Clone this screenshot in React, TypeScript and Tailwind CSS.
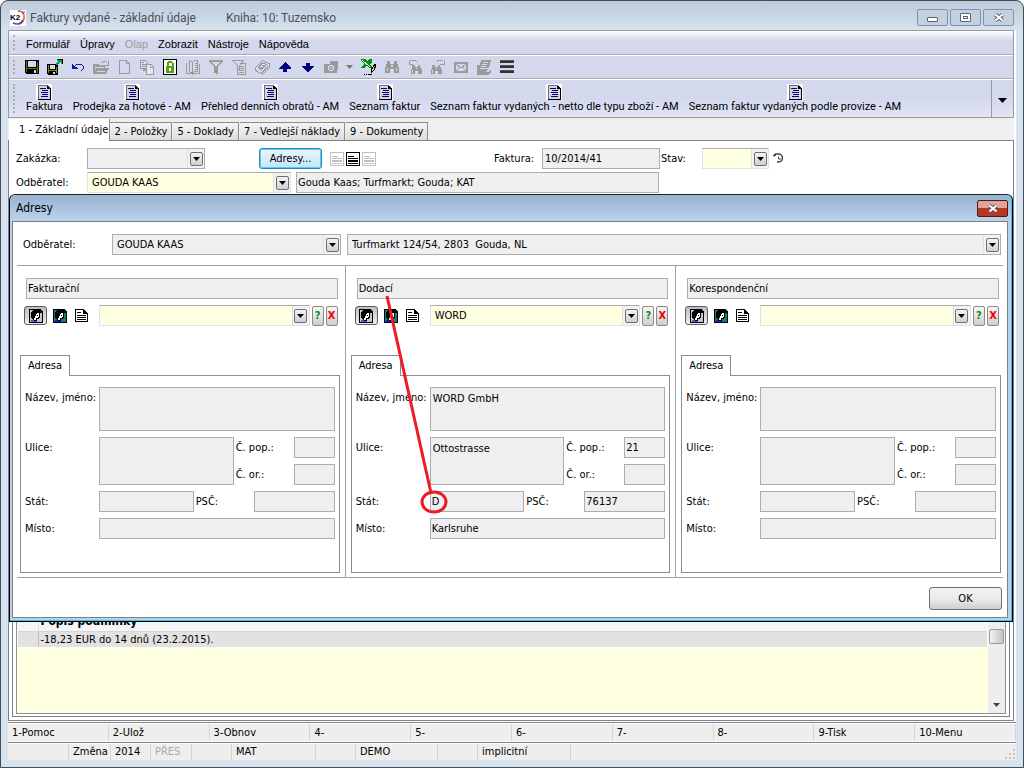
import { useId, useState } from "react";
import type { ReactNode } from "react";
import clsx from "clsx";

type AddressData = {
  title: string;
  code: string;
  name: string;
  street: string;
  houseNo: string;
  orientNo: string;
  state: string;
  zip: string;
  city: string;
};

const emptyAddress = {
  code: "",
  name: "",
  street: "",
  houseNo: "",
  orientNo: "",
  state: "",
  zip: "",
  city: "",
};

const addresses: AddressData[] = [
  { ...emptyAddress, title: "Fakturační" },
  {
    title: "Dodací",
    code: "WORD",
    name: "WORD GmbH",
    street: "Ottostrasse",
    houseNo: "21",
    orientNo: "",
    state: "D",
    zip: "76137",
    city: "Karlsruhe",
  },
  { ...emptyAddress, title: "Korespondenční" },
];

const menuItems = ["Formulář", "Úpravy", "Olap", "Zobrazit", "Nástroje", "Nápověda"];

const reports = [
  "Faktura",
  "Prodejka za hotové - AM",
  "Přehled denních obratů - AM",
  "Seznam faktur",
  "Seznam faktur vydaných - netto dle typu zboží - AM",
  "Seznam faktur vydaných podle provize - AM",
];

const tabs = [
  "1 - Základní údaje",
  "2 - Položky",
  "5 - Doklady",
  "7 - Vedlejší náklady",
  "9 - Dokumenty",
];

const functionKeys = [
  "1-Pomoc",
  "2-Ulož",
  "3-Obnov",
  "4-",
  "5-",
  "6-",
  "7-",
  "8-",
  "9-Tisk",
  "10-Menu",
];

const GRAY = "#9b9b9b";

function Icon({ children, size = 16 }: { children: ReactNode; size?: number }) {
  return (
    <svg width={size} height={size} viewBox="0 0 16 16" fill="none" shapeRendering="crispEdges" aria-hidden="true">
      {children}
    </svg>
  );
}

const Binoculars = () => (
  <path
    fill={GRAY}
    d="M3 2h3v3h4V2h3v3h1v3h1v6h-5v-4H6v4H1V8h1V5h1zM3 9v3h1V9zM12 9v3h1V9zM7 6v2h2V6z"
    fillRule="evenodd"
  />
);

const tools: { label: string; icon: ReactNode }[] = [
  {
    label: "Uložit",
    icon: (
      <>
        <path d="M1 1h14v14H2l-1-1z" fill="#000" />
        <path d="M4 2h8v6H4z" fill="#d3d8ed" />
        <path d="M2 2h1v11H2zM13 3h1v11h-1zM3 9h10v1H3z" fill="#6b6b00" />
        <path d="M10 11h2v3h-2z" fill="#d3d8ed" />
      </>
    ),
  },
  {
    label: "Uložit a zavřít",
    icon: (
      <>
        <path d="M0 5h11v11H1l-1-1z" fill="#000" />
        <path d="M3 6h5v4H3z" fill="#d3d8ed" />
        <path d="M1 6h1v8H1zM9 8h1v6H9zM2 11h7v1H2z" fill="#8a8a00" />
        <path d="M6 13h2v2H6z" fill="#d3d8ed" />
        <path d="M10 0h5v5h-1V3h-1v1h-1v1h-1v1h-2V4h1V3h1V2h-1z" fill="#00a43a" />
        <path d="M11 0h5v5h-1V1h-4z" fill="#000" />
      </>
    ),
  },
  {
    label: "Zpět",
    icon: (
      <>
        <path d="M2 4v6h6L6 8 4 7z" fill="#0b1ea0" />
        <path d="M5 7l2-2h4l2 2v3l-2 2" stroke="#0b1ea0" />
      </>
    ),
  },
  {
    label: "Otevřít",
    icon: (
      <>
        <path d="M0 5h5l1 1h6v3h4l-3 6H0z" fill={GRAY} />
        <path d="M2 8h9M2 10h1M4 12h8" stroke="#d3d8ed" />
        <path d="M8 3h2l2-1 2 2M15 2v4h-3" stroke={GRAY} />
      </>
    ),
  },
  {
    label: "Nový",
    icon: <path d="M3.500 1.500h7l3 3v10h-10zM10.500 1.500v3h3" stroke={GRAY} />,
  },
  {
    label: "Kopie",
    icon: (
      <>
        <path d="M1.500 1.500h5l2 2v6h-7z" stroke={GRAY} />
        <path d="M3 3h2v1H3zM3 5h5v1H3zM3 7h5v1H3zM4 9h4v3H4z" fill={GRAY} />
        <path d="M7.500 5.500h5l2 2v8h-7z" fill="#e4e7f4" stroke={GRAY} />
        <path d="M11.500 5.500v3h3" stroke={GRAY} />
      </>
    ),
  },
  {
    label: "Zámek",
    icon: (
      <>
        <path d="M1 0h14v16H1z" fill="#000" />
        <path d="M2 1h12v14H2z" fill="#fff" />
        <path d="M4 7h8v7H4z" fill="#5aa00a" />
        <path d="M5.500 7V4l1-1h3l1 1v3" stroke="#5aa00a" strokeWidth="2" />
        <path d="M7 9h2v3H7z" fill="#fff" />
      </>
    ),
  },
  {
    label: "Kniha",
    icon: (
      <>
        <path d="M1.500 3.500v11h5l1 1 1-1h6v-10M4.500 1.500l3 2v11l-3-2zM7.500 3.500l2-2h3v11h-3l-2 2" stroke={GRAY} />
        <path d="M10 4h2v1h-2zM10 6h2v1h-2zM10 8h2v1h-2zM10 10h2v1h-2z" fill={GRAY} />
      </>
    ),
  },
  {
    label: "Filtr",
    icon: <path d="M2 2h12l-5 6v6l-2-1V8z" stroke={GRAY} strokeWidth="1.500" />,
  },
  {
    label: "Seznam filtrů",
    icon: (
      <>
        <path d="M1.500 1.500h11l-4 5v5l-2-2v-3z" stroke={GRAY} />
        <path d="M9 4.500h5v10.500H6.500v-5M9 7h4M9 9h4M9 11h4M8 13h5" stroke={GRAY} />
      </>
    ),
  },
  {
    label: "Vymazat",
    icon: (
      <>
        <path d="M1.500 8.500l7-7 7 3v4l-7 7-7-4z" stroke={GRAY} />
        <path d="M3 8l5-5 5 2-6 6zM7 13l7-7v2l-6 7z" fill={GRAY} />
        <path d="M8 5h3v1H8zM6 7h3v1H6z" fill="#eef0f8" />
      </>
    ),
  },
  {
    label: "Předchozí",
    icon: <path d="M8 3l6 6v1h-4v3H6v-3H2V9z" fill="#000080" />,
  },
  {
    label: "Další",
    icon: <path d="M6 4h4v3h4v1l-6 5-6-5V7h4z" fill="#000080" />,
  },
  {
    label: "Fotografie",
    icon: (
      <>
        <path d="M1 5h6V2h8v9h-1v3H1z" fill={GRAY} />
        <circle cx="8" cy="9" r="2.500" stroke="#d3d8ed" />
        <path d="M7 10l3-3" stroke="#d3d8ed" />
      </>
    ),
  },
];

const moreTools: { label: string; icon: ReactNode }[] = [
  {
    label: "Export do Excelu",
    icon: (
      <>
        <path d="M0 0h4l2 2 2-2h3v3L9 5l3 4H8L6 7 3 9H0l3-4-3-3z" fill="#0a8a12" />
        <path d="M1 1l8 7" stroke="#d7f0d7" />
        <path d="M14 5l1 1-2 5-3 3v-3z" fill="#f2d21b" stroke="#000" />
        <path d="M3 15h1v1H3zM5 15h1v1H5zM7 15h4v1H7z" fill="#000" />
      </>
    ),
  },
  { label: "Hledat", icon: <Binoculars /> },
  {
    label: "Hledat předchozí",
    icon: (
      <>
        <g transform="translate(3 4) scale(.8)">
          <Binoculars />
        </g>
        <path d="M2 6V2M2 5h4M3 2l3-1 3 1v1" stroke={GRAY} />
      </>
    ),
  },
  {
    label: "Hledat další",
    icon: (
      <>
        <g transform="translate(0 4) scale(.8)">
          <Binoculars />
        </g>
        <path d="M14 6V2M14 5h-4M13 2l-3-1-3 1v1" stroke={GRAY} />
      </>
    ),
  },
  {
    label: "E-mail",
    icon: (
      <>
        <path d="M1 3h14v11H1z" fill={GRAY} />
        <path d="M3 5h10v7H3z" fill="#d3d8ed" />
        <path d="M3 5l5 4 5-4M3 12l4-4M13 12L9 8" stroke={GRAY} />
      </>
    ),
  },
  {
    label: "Přílohy",
    icon: (
      <>
        <path d="M5 1h10l-2 8H3zM1 6h3v7h9l2-3v3l-2 3H1z" fill={GRAY} />
        <path d="M7 3h5M6 5h5M5 7h5" stroke="#d3d8ed" />
        <path d="M2 10h10l-2 3H2z" fill={GRAY} />
      </>
    ),
  },
  {
    label: "Menu",
    icon: (
      <>
        <path d="M1 1h14v3H1zM1 6h14v3H1zM1 11h14v3H1z" fill="#333" />
        <path d="M1 1h14v1H1zM1 6h14v1H1zM1 11h14v1H1z" fill="#4d5a52" />
      </>
    ),
  },
];

const K2Logo = () => (
  <svg width="16" height="16" viewBox="0 0 16 16" aria-hidden="true">
    <path d="M0 0h16v16H0z" fill="#fff" />
    <path d="M8 1q6 0 6 6t-5 7" fill="none" stroke="#d6203a" strokeWidth="1.500" />
    <path d="M10 1q4 2 4 7t-6 7" fill="none" stroke="#f0a040" />
    <path d="M3 13q6 3 10-3" fill="none" stroke="#4a4fa8" strokeWidth="1.500" />
    <path d="M12 2l3-1-1 3z" fill="#8a5ab0" />
    <text x="0" y="10" fontSize="8" fontWeight="900" fontFamily="Liberation Sans, sans-serif">
      K2
    </text>
  </svg>
);

const ReportIcon = () => (
  <svg width="16" height="16" viewBox="0 0 16 16" shapeRendering="crispEdges" aria-hidden="true">
    <path d="M0 0h16v16H0z" fill="#fff" />
    <path d="M2 1h10v1H3v13H2z" fill="#6f6f6f" />
    <path d="M11 2h2v1h1v1h1v12H2v-1h12V5h-3z" fill="#000" />
    <path d="M3 2h8v3h3v10H3z" fill="#d3d7dc" />
    <path d="M4 4h6v1H4zM6 6h6v1H6zM5 8h7v1H5zM6 10h6v1H6zM5 12h7v1H5z" fill="#00008b" />
  </svg>
);

const PersonIcon = ({ back, coat }: { back: string; coat: string }) => (
  <svg width="14" height="14" viewBox="0 0 14 14" shapeRendering="crispEdges" aria-hidden="true">
    <path d="M0 0h11l3 3v11H0z" fill="#000" />
    <path d="M1 1h9v3h3v9H1z" fill={back} />
    <path d="M4 1h5l2 2v5l-1 2H8v2H6l-3-2-1-2V3z" fill="#000" />
    <path d="M8 4h2v4H9v1H7v2H5V9h1V7h1V5h1z" fill="#fff" />
    <path d="M8 6h1v1H8z" fill="#000" />
    <path d="M2 13v-2h2l2 1h2v1z" fill={coat} />
  </svg>
);

const PageIcon = () => (
  <svg width="14" height="14" viewBox="0 0 14 14" shapeRendering="crispEdges" aria-hidden="true">
    <path d="M0 0h9v1h1v1h1v1h1v1h1v9H0zM1 1v11h11V5H8V1z" fill="#000" fillRule="evenodd" />
    <path d="M2 3h4v1H2zM2 6h9v1H2zM2 8h9v1H2zM2 10h9v1H2z" fill="#000" />
  </svg>
);

const LinesIcon = ({ color }: { color: string }) => (
  <svg width="14" height="14" viewBox="0 0 14 14" shapeRendering="crispEdges" aria-hidden="true">
    <path d="M0 0h14v14H0zM1 1v12h12V1z" fill={color} fillRule="evenodd" />
    <path d="M2 4h6v1H2zM2 6h10v1H2zM2 8h10v2H2zM2 11h10v1H2z" fill={color} />
  </svg>
);

function Grip() {
  return <span className="ml-1 w-[3px] self-stretch my-1 border-l-2 border-dotted border-[#a9adbd] shrink-0" />;
}

type ComboProps = {
  label: string;
  value?: string;
  gray?: boolean;
  className?: string;
  id?: string;
};

function Combo({ label, value = "", gray, className, id }: ComboProps) {
  return (
    <div className={clsx("relative h-[21px]", className)}>
      <select
        id={id}
        aria-label={label}
        defaultValue={value}
        className={clsx(
          "block h-full w-full appearance-none border pr-5 pl-1 whitespace-pre",
          gray ? "border-[#abadb3] bg-[#efefef]" : "border-[#e0e3ee] border-t-[#abadb3] bg-[#ffffe1]"
        )}
      >
        <option>{value}</option>
      </select>
      <span className="pointer-events-none absolute inset-y-px right-px flex w-[17px] items-center justify-center border-l border-[#e0e0e0] bg-[#f2f2f2]">
        <span className="flex h-[14px] w-[13px] items-center justify-center rounded-xs border border-[#707070] bg-linear-to-b from-[#f4f4f4] to-[#cfcfcf]">
          <svg width="7" height="4" viewBox="0 0 7 4" aria-hidden="true">
            <path d="M0 0h7L3.500 4z" fill="#000" />
          </svg>
        </span>
      </span>
    </div>
  );
}

type FieldProps = {
  label: string;
  value: string;
  className?: string;
  labelClass?: string;
  multiline?: boolean;
};

// label and input are two cells of the surrounding grid
function Field({ label, value, className, labelClass, multiline }: FieldProps) {
  const id = useId();
  const box = clsx("block w-full min-w-0 border border-[#abadb3] bg-[#efefef]", className);
  return (
    <>
      <label htmlFor={id} className={clsx("pt-1 whitespace-nowrap", labelClass)}>
        {label}
      </label>
      {multiline ? (
        <textarea id={id} readOnly defaultValue={value} className={clsx(box, "resize-none overflow-hidden px-0.5 pt-1")} />
      ) : (
        <input id={id} readOnly defaultValue={value} className={clsx(box, "h-[21px] px-px")} />
      )}
    </>
  );
}

function AddressColumn({ address, children }: { address: AddressData; children?: ReactNode }) {
  const small = "h-5 w-3 rounded-xs border border-[#8a8a8a] bg-linear-to-b from-[#f6f6f6] to-[#cfcfcf] text-[11px] leading-none font-bold";
  return (
    <section className="relative border-r border-[#a0a0a0] pt-3 pr-[5px] pb-1 pl-[5px] last:border-r-0 last:pr-1.5">
      <input
        readOnly
        aria-label="Typ adresy"
        defaultValue={address.title}
        className="ml-1.5 block h-[21px] w-[calc(100%-8px)] border border-[#abadb3] bg-[#efefef] px-px"
      />
      <div className="mt-1.5 ml-1 flex h-[21px] items-center pr-0.5">
        <button
          aria-label="Partner"
          className="flex h-[19px] w-[23px] items-center justify-center rounded-[3px] border border-[#5c5c5c] bg-linear-to-b from-[#bdbdbd] to-[#f0f0f0]"
        >
          <PersonIcon back="#c4c4d8" coat="#5b56c8" />
        </button>
        <button aria-label="Kontakt" className="ml-1.5">
          <PersonIcon back="#0b7f78" coat="#1717c0" />
        </button>
        <button aria-label="Adresa" className="ml-2">
          <PageIcon />
        </button>
        <Combo label="Výběr adresy" value={address.code} className="ml-2.5 min-w-0 flex-1" />
        <button className={clsx(small, "ml-0.5 text-[#0a8a1e]")}>?</button>
        <button className={clsx(small, "ml-0.5 text-[#f00000]")}>X</button>
      </div>
      <div className="mt-[29px] flex" role="tablist">
        <button role="tab" aria-selected="true" className="relative z-10 -mb-px h-[21px] w-[50px] border border-b-0 border-[#898c95] bg-white">
          Adresa
        </button>
      </div>
      <div className="grid h-[198px] grid-cols-[74px_1fr] content-start gap-y-1.5 border border-[#898c95] py-[11px] pr-1 pl-1">
        <Field label="Název, jméno:" value={address.name} className="h-11" multiline />
        <div className="col-span-2 grid grid-cols-[74px_1fr_60px_41px] gap-y-1.5">
          <Field label="Ulice:" value={address.street} className="row-span-2 h-12" labelClass="row-span-2" multiline />
          <Field label="Č. pop.:" value={address.houseNo} labelClass="pl-0.5" />
          <Field label="Č. or.:" value={address.orientNo} labelClass="pl-0.5" />
        </div>
        <div className="col-span-2 grid grid-cols-[74px_1fr_60px_81px]">
          <Field label="Stát:" value={address.state} />
          <Field label="PSČ:" value={address.zip} labelClass="pl-0.5" />
        </div>
        <Field label="Místo:" value={address.city} />
      </div>
      {children}
    </section>
  );
}

function AddressDialog({ onClose }: { onClose: () => void }) {
  const id = useId();
  return (
    <div
      role="dialog"
      aria-label="Adresy"
      className="absolute inset-x-0 top-[53px] z-20 rounded-t-md border border-black border-t-[#222] bg-[#b9d1ea]"
    >
      <div className="border-r border-b border-[#35c5ea] rounded-t-md pr-[3px] pb-0.5 pl-0.5 bg-linear-to-b from-[#97b3d2] from-0% to-[#b9d1ea] to-[24px]">
        <header className="flex h-[26px] items-center justify-between pl-1">
          <h2 className="text-[12px]">Adresy</h2>
          <button
            aria-label="Zavřít"
            onClick={onClose}
            className="flex h-[17px] w-[31px] items-center justify-center rounded-xs border border-[#4b1a1a] bg-linear-to-b from-[#e3a297] from-50% to-[#b8371f] to-50%"
          >
            <svg width="12" height="9" viewBox="0 0 12 9" aria-hidden="true">
              <path d="M2.500 1.500l7 6M9.500 1.500l-7 6" stroke="#525a70" strokeWidth="4" />
              <path d="M2.500 1.500l7 6M9.500 1.500l-7 6" stroke="#fff" strokeWidth="2" />
            </svg>
          </button>
        </header>
        <div className="border border-[#7d8087] bg-white">
          <div className="flex items-start pt-3 pr-1.5 pl-2.5">
            <label htmlFor={id} className="w-[89px] pt-1">
              Odběratel:
            </label>
            <Combo id={id} label="Odběratel" value="GOUDA KAAS" gray className="w-[229px]" />
            <Combo label="Adresa odběratele" value={"Turfmarkt 124/54, 2803\u00a0 Gouda, NL"} gray className="ml-1.5 flex-1" />
          </div>
          <hr className="mx-1 mt-2.5 border-[#a0a0a0]" />
          <div className="grid grid-cols-3 pl-0.5">
            {addresses.map((address) => (
              <AddressColumn key={address.title} address={address}>
                {address.state && (
                  <svg className="pointer-events-none absolute top-[30px] left-0 z-20" width="110" height="220" fill="none" aria-hidden="true">
                    <path d="M41 0l44 197" stroke="#ed1c24" strokeWidth="3" />
                    <ellipse cx="88" cy="206" rx="12" ry="10" stroke="#ed1c24" strokeWidth="3" />
                  </svg>
                )}
              </AddressColumn>
            ))}
          </div>
          <hr className="mx-1 border-[#a0a0a0]" />
          <div className="flex justify-end px-[5px] pt-[9px] pb-[7px]">
            <button
              onClick={onClose}
              className="h-[23px] w-[73px] rounded-[3px] border border-[#707070] bg-linear-to-b from-[#f2f2f2] via-[#ebebeb] to-[#cfcfcf]"
            >
              OK
            </button>
          </div>
        </div>
      </div>
    </div>
  );
}

function InvoiceForm({ onAddresses }: { onAddresses: () => void }) {
  const id = useId();
  const gray = "h-[21px] border border-[#abadb3] bg-[#efefef]";
  return (
    <form className="pt-[7px] pl-[7px]" onSubmit={(e) => e.preventDefault()}>
      <div className="flex items-start">
        <label htmlFor={id + "order"} className="w-[71px] pt-1">
          Zakázka:
        </label>
        <Combo id={id + "order"} label="Zakázka" gray className="w-[118px]" />
        <button
          type="button"
          onClick={onAddresses}
          className="ml-[54px] h-[21px] w-[63px] rounded-[3px] border border-[#2c84b8] bg-linear-to-b from-[#eaf6fd] to-[#c4e5f6] shadow-[inset_0_0_0_1px_#4fd0f7]"
        >
          Adresy...
        </button>
        <div className="ml-2 flex gap-0.5 pt-1">
          <LinesIcon color="#c0c0c0" />
          <LinesIcon color="#000" />
          <LinesIcon color="#c0c0c0" />
        </div>
        <label htmlFor={id + "no"} className="ml-[118px] w-12 pt-1">
          Faktura:
        </label>
        <input id={id + "no"} readOnly defaultValue="10/2014/41" className={clsx(gray, "w-[118px] px-0.5")} />
        <label htmlFor={id + "state"} className="w-[42px] pt-1 pl-px">
          Stav:
        </label>
        <Combo id={id + "state"} label="Stav" className="w-[67px]" />
        <svg className="mt-[5px] ml-1" width="10" height="10" viewBox="0 0 10 10" fill="none" stroke="#444" aria-hidden="true">
          <path d="M1 3.500V2.500L2.500 1h3a3.500 3.500 0 0 1 0 8H4" strokeWidth="1.500" />
          <path d="M5.500 3.500V6H8M0 2.500h3" />
        </svg>
      </div>
      <div className="mt-[3px] flex items-start">
        <label htmlFor={id + "customer"} className="w-[71px] pt-1">
          Odběratel:
        </label>
        <Combo id={id + "customer"} label="Odběratel" value="GOUDA KAAS" className="w-[204px]" />
        <input
          readOnly
          aria-label="Adresa"
          defaultValue="Gouda Kaas; Turfmarkt; Gouda; KAT"
          className={clsx(gray, "ml-[5px] w-[363px] px-px")}
        />
      </div>
    </form>
  );
}

function Conditions() {
  return (
    <div className="m-[3px] mt-2 flex flex-1 flex-col justify-end border border-[#7d8087] p-[3px] pb-0.5">
      <div className="flex h-[104px] border border-[#8f9299] bg-[#ffffe1]">
        <div className="flex-1 p-px">
          <table className="w-full border-collapse text-left">
            <thead>
              <tr className="h-[19px] border-b border-[#d5d5d5] bg-[#f4f5f7]">
                <th className="w-[20px] border-r border-[#e0e0e0]" />
                <th className="p-0 pl-0.5 text-[12px] leading-4 font-bold">Popis podmínky</th>
              </tr>
            </thead>
            <tbody>
              <tr className="bg-[#e2e2e2]">
                <td className="border-r border-[#bdbdbd]" />
                <td className="p-0 pl-0.5 leading-[15px]">-18,23 EUR do 14 dnů (23.2.2015).</td>
              </tr>
            </tbody>
          </table>
        </div>
        <div className="flex w-[17px] flex-col items-center justify-between bg-[#eeeeee]">
          <span className="mt-[18px] h-[15px] w-[15px] rounded-xs border border-[#9a9a9a] bg-linear-to-r from-[#f4f4f4] to-[#c4c4c8]" />
          <svg className="mb-1.5" width="7" height="4" viewBox="0 0 7 4" aria-hidden="true">
            <path d="M0 0h7L3.500 4z" fill="#444" />
          </svg>
        </div>
      </div>
    </div>
  );
}

const statusCell = "h-4 border-r border-[#d5d5d5] pl-1 leading-4";
const frameButton = "flex h-[17px] w-[31px] items-center justify-center rounded-xs border border-[#8392a8] bg-[#c3d0df]";

export default function App() {
  const [tab, setTab] = useState(0);
  const [dialogOpen, setDialogOpen] = useState(true);

  return (
    <div className="flex min-h-screen flex-col rounded-t-lg border border-[#4a4a4c] bg-[#d6e3f1] bg-linear-to-b from-[#bccad9] from-0% to-[#d6e3f1] to-[30px] px-[7px] pb-[7px] font-['DejaVu_Sans_Condensed','Noto_Sans',sans-serif] text-[11px] leading-[14px] text-black">
      <header className="flex h-[29px] items-center justify-between pt-1 pr-0.5 pl-0.5">
        <div className="flex items-center font-[Roboto,sans-serif] text-[12px] text-[#4a5058]">
          <K2Logo />
          <h1 className="ml-1 w-[196px] whitespace-nowrap">Faktury vydané - základní údaje</h1>
          <span>Kniha: 10: Tuzemsko</span>
        </div>
        <div className="flex gap-0.5">
          <button aria-label="Minimalizovat" className={frameButton}>
            <span className="mt-1 h-[5px] w-[11px] rounded-[1px] border border-[#5a6274] bg-white" />
          </button>
          <button aria-label="Maximalizovat" className={frameButton}>
            <span className="flex h-[9px] w-[11px] items-center justify-center rounded-[1px] border border-[#5a6274] bg-white">
              <span className="h-[3px] w-[5px] border border-[#5a6274]" />
            </span>
          </button>
          <button aria-label="Zavřít okno" className={frameButton}>
            <svg width="12" height="9" viewBox="0 0 12 9" aria-hidden="true">
              <path d="M2.500 1.500l7 6M9.500 1.500l-7 6" stroke="#5a6274" strokeWidth="4" />
              <path d="M2.500 1.500l7 6M9.500 1.500l-7 6" stroke="#fff" strokeWidth="2" />
            </svg>
          </button>
        </div>
      </header>

      <div className="flex flex-1 flex-col border-r-2 border-white">
        <div className="border border-[#9a9a9a] bg-[#d3d8ed] font-['Liberation_Sans',sans-serif]">
          <nav className="flex h-6 items-stretch border-b border-[#a8aab2] bg-linear-to-b from-white from-0% to-[#d3d8ed] to-[10px]">
            <Grip />
            <div className="ml-1 flex items-center pt-0.5 pl-px">
              {menuItems.map((item) => (
                <button key={item} disabled={item === "Olap"} className="px-[5px] disabled:text-[#9b9b9b]">
                  {item}
                </button>
              ))}
            </div>
          </nav>
          <div className="flex h-6 items-center border-t border-b border-t-white border-b-[#a8aab2]">
            <Grip />
            <div className="ml-1 flex items-center">
              {tools.map((tool) => (
                <button key={tool.label} aria-label={tool.label} className="flex w-[23px] justify-center">
                  <Icon>{tool.icon}</Icon>
                </button>
              ))}
              <button aria-label="Další možnosti" className="flex w-[15px] justify-center">
                <svg width="7" height="4" viewBox="0 0 7 4" aria-hidden="true">
                  <path d="M0 0h7L3.500 4z" fill="#7a7a7a" />
                </svg>
              </button>
              {moreTools.map((tool) => (
                <button key={tool.label} aria-label={tool.label} className="flex w-[23px] justify-center">
                  <Icon>{tool.icon}</Icon>
                </button>
              ))}
            </div>
          </div>
          <div className="flex h-[38px] border-t border-white bg-linear-to-b from-[#d3d8ed] from-50% to-[#e1e5f6]">
            <Grip />
            <div className="ml-[5px] flex flex-1 items-start pt-1 font-[Roboto,sans-serif]">
              {reports.map((report) => (
                <button key={report} className="flex flex-col items-center px-[5px] whitespace-nowrap">
                  <ReportIcon />
                  <span>{report}</span>
                </button>
              ))}
            </div>
            <button aria-label="Další sestavy" className="flex w-[22px] items-center justify-center border-l border-[#9a9a9a] pt-1">
              <svg width="9" height="5" viewBox="0 0 9 5" aria-hidden="true">
                <path d="M0 0h9L4.500 5z" fill="#000" />
              </svg>
            </button>
          </div>
        </div>

        <div className="flex h-[22px] items-end bg-[#efefef] px-px" role="tablist">
          {tabs.map((name, index) => (
            <button
              key={name}
              role="tab"
              aria-selected={tab === index}
              onClick={() => setTab(index)}
              className={clsx(
                "border-r border-[#898c95] whitespace-nowrap",
                tab === index
                  ? "relative z-10 -mb-px h-[22px] bg-white pr-px pl-2.5"
                  : "mr-px h-[18px] border-t bg-linear-to-b from-[#f4f4f4] to-[#dddddd] px-1 pt-px"
              )}
            >
              {name}
            </button>
          ))}
        </div>

        <main className="relative flex min-h-[580px] flex-1 flex-col border border-[#7d8087] bg-white">
          <InvoiceForm onAddresses={() => setDialogOpen(true)} />
          <Conditions />
          {dialogOpen && <AddressDialog onClose={() => setDialogOpen(false)} />}
        </main>
      </div>

      <footer className="bg-white pt-px">
        <div className="flex border-t border-[#7d8087] pt-px">
          {functionKeys.map((key) => (
            <button key={key} className="h-[17px] flex-1 border-r border-[#d5d5d5] bg-[#f0eded] pl-1 text-left">
              {key}
            </button>
          ))}
        </div>
        <div className="mt-px border-t border-[#7d8087] pt-px">
          <div className="flex bg-[#f0eded]">
            <span className={clsx(statusCell, "w-[61px]")} />
            <span className={clsx(statusCell, "w-[42px]")}>Změna</span>
            <span className={clsx(statusCell, "w-10")}>2014</span>
            <span className={clsx(statusCell, "w-[41px] text-[#a8a8a8]")}>PŘES</span>
            <span className={clsx(statusCell, "w-10")} />
            <span className={clsx(statusCell, "w-[84px]")}>MAT</span>
            <span className={clsx(statusCell, "w-10")} />
            <span className={clsx(statusCell, "w-[82px]")}>DEMO</span>
            <span className={clsx(statusCell, "w-10")} />
            <span className={clsx(statusCell, "w-[93px]")}>implicitní</span>
            <span className="flex flex-1 items-end justify-end">
              <svg width="11" height="11" viewBox="0 0 11 11" aria-hidden="true">
                <path d="M8 0h2v2H8zM8 4h2v2H8zM8 8h2v2H8zM4 4h2v2H4zM4 8h2v2H4zM0 8h2v2H0z" fill="#c4c4c4" />
              </svg>
            </span>
          </div>
        </div>
      </footer>
    </div>
  );
}
